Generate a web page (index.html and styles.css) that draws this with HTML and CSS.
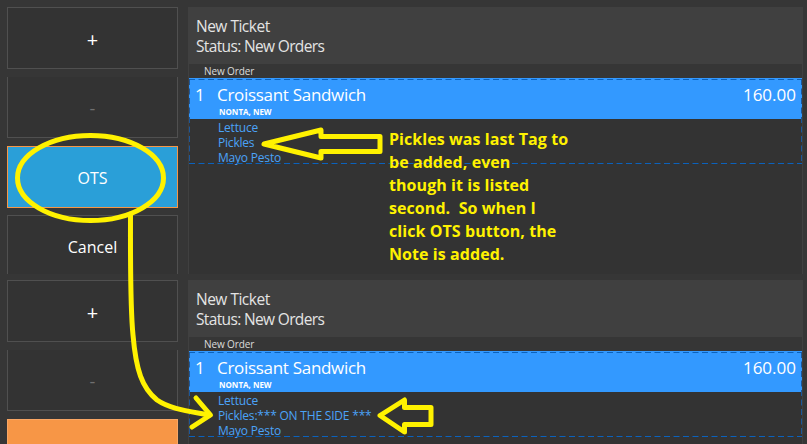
FILE: index.html
```html
<!DOCTYPE html>
<html lang="en">
  <head>
    <meta charset="UTF-8" />
    <meta name="viewport" content="width=device-width, initial-scale=1.0" />
    <title>Order Tags</title>
    <link rel="stylesheet" href="styles.css">
  </head>
  <body>
    <div class="screen before">
      <div class="buttons">
        <button class="btn plus">+</button>
        <button class="btn disabled">-</button>
        <button class="btn active">OTS</button>
        <button class="btn cut">Cancel</button>
      </div>
      <div class="ticket">
        <div class="ticketHeader">
          <p class="ticketTitle">New Ticket</p>
          <p class="ticketStatus">Status: New Orders</p>
        </div>
        <p class="group">New Order</p>
        <div class="order">
          <div class="orderLine">
            <span class="qty">1</span>
            <div class="item">
              <p class="name">Croissant Sandwich</p>
              <p class="state">NONTA, NEW</p>
            </div>
            <span class="price">160.00</span>
          </div>
          <ul class="tags">
            <li>Lettuce</li>
            <li>Pickles</li>
            <li>Mayo Pesto</li>
          </ul>
          <svg class="outline" width="613" height="86">
            <path d="M0 1.5H613M0 85.5H613" />
            <path class="side" d="M0.5 1V86M612.5 1V86" />
          </svg>
        </div>
      </div>
    </div>

    <div class="screen after">
      <div class="buttons">
        <button class="btn plus">+</button>
        <button class="btn disabled">-</button>
        <button class="btn orange"></button>
      </div>
      <div class="ticket">
        <div class="ticketHeader">
          <p class="ticketTitle">New Ticket</p>
          <p class="ticketStatus">Status: New Orders</p>
        </div>
        <p class="group">New Order</p>
        <div class="order">
          <div class="orderLine">
            <span class="qty">1</span>
            <div class="item">
              <p class="name">Croissant Sandwich</p>
              <p class="state">NONTA, NEW</p>
            </div>
            <span class="price">160.00</span>
          </div>
          <ul class="tags">
            <li>Lettuce</li>
            <li>Pickles:*** ON THE SIDE ***</li>
            <li>Mayo Pesto</li>
          </ul>
          <svg class="outline" width="613" height="86">
            <path d="M0 1.5H613M0 85.5H613" />
            <path class="side" d="M0.5 1V86M612.5 1V86" />
          </svg>
        </div>
      </div>
    </div>

    <!-- hand drawn marks over both screens -->
    <svg class="marks" width="807" height="444" viewBox="0 0 807 444">
      <ellipse cx="90.5" cy="178" rx="73" ry="42.5" />
      <path d="M130.5 214C130.5 262 130 305 133 335C136 370 142 388 157 400C170 409 188 411 209 415" />
      <path d="M196 398L210.5 415L192 427" />
      <path d="M264 144L321 130V136.500H380V151.500H321V158Z" />
      <path d="M380 415.500L404.500 400V407.500H431V424.500H404.500V432Z" />
    </svg>
    <div class="note">
      <p>Pickles was last Tag to</p>
      <p>be added, even</p>
      <p>though it is listed</p>
      <p>second.&nbsp; So when I</p>
      <p>click OTS button, the</p>
      <p>Note is added.</p>
    </div>
  </body>
</html>
```
FILE: styles.css
```css
* {
  margin: 0;
  padding: 0;
  box-sizing: border-box;
  font-family: "Open Sans", "Noto Sans", sans-serif;
}
body {
  position: relative;
  width: 807px;
  height: 444px;
  overflow: hidden;
  background-color: #363636;
}
p,
li,
span {
  white-space: nowrap;
}
.screen {
  display: flex;
  gap: 10px;
  padding: 7px 4px 0 7px;
  overflow: hidden;
}
.before {
  height: 274px;
}
.after {
  height: 170px;
  padding-top: 6px;
}
.buttons {
  display: flex;
  flex-direction: column;
  gap: 8px;
  width: 171px;
}
.btn {
  flex: none;
  height: 62px;
  background-color: #333333;
  border: 1px solid #505050;
  color: white;
  font-size: 16px;
}
.plus {
  padding-top: 3px;
  font-size: 20px;
}
.disabled {
  height: 61px;
  padding-top: 2px;
  border-top: none;
  color: #707070;
  font-size: 18px;
}
.active {
  padding-top: 2px;
  background-color: #2a9fd8;
  border-color: #f79646;
}
.cut {
  height: 66px;
  margin-top: -1px;
  padding-bottom: 2px;
}
.orange {
  background-color: #f79646;
  border-color: #f9a765;
}
.ticket {
  flex: none;
  width: 615px;
  height: 290px;
  border: 1px solid #404040;
  border-top: none;
  background-color: #333333;
}
.ticketHeader {
  height: 57px;
  margin: 0 -1px;
  padding: 9px 8px 0;
  background-color: #404040;
  color: #e4e4e4;
  font-size: 15.5px;
  line-height: 20px;
}
.ticketTitle {
  letter-spacing: -0.5px;
}
.ticketStatus {
  letter-spacing: -0.65px;
}
.group {
  height: 14px;
  padding-left: 15px;
  background-color: #363636;
  color: #dcdcdc;
  font-size: 10px;
  letter-spacing: -0.1px;
  line-height: 15px;
}
.order {
  position: relative;
  height: 86px;
}
.orderLine {
  display: flex;
  height: 41px;
  padding: 5px 6px 0;
  background-color: #3399ff;
  color: white;
  font-size: 17px;
  line-height: 24px;
}
.qty {
  width: 22px;
}
.item {
  flex: 1;
}
.name {
  letter-spacing: -0.3px;
}
.state {
  padding-left: 2px;
  font-size: 8px;
  font-weight: 700;
  line-height: 9px;
}
.tags {
  list-style: none;
  padding: 1px 0 0 29px;
  color: #4ba3f8;
  font-size: 12px;
  letter-spacing: -0.2px;
  line-height: 15px;
}
.outline {
  position: absolute;
  top: 0;
  left: 0;
  fill: none;
  stroke: #0b62bd;
  stroke-dasharray: 6 3.5;
}
.outline .side {
  stroke: #1c5799;
}
.marks {
  position: absolute;
  top: 0;
  left: 0;
  fill: none;
  stroke: #fff200;
  stroke-width: 5;
  stroke-linecap: round;
  stroke-linejoin: round;
}
.note {
  position: absolute;
  top: 128px;
  left: 389px;
  color: #fff200;
  font-size: 16px;
  font-weight: 700;
  letter-spacing: 0.07px;
  line-height: 23px;
}
```
